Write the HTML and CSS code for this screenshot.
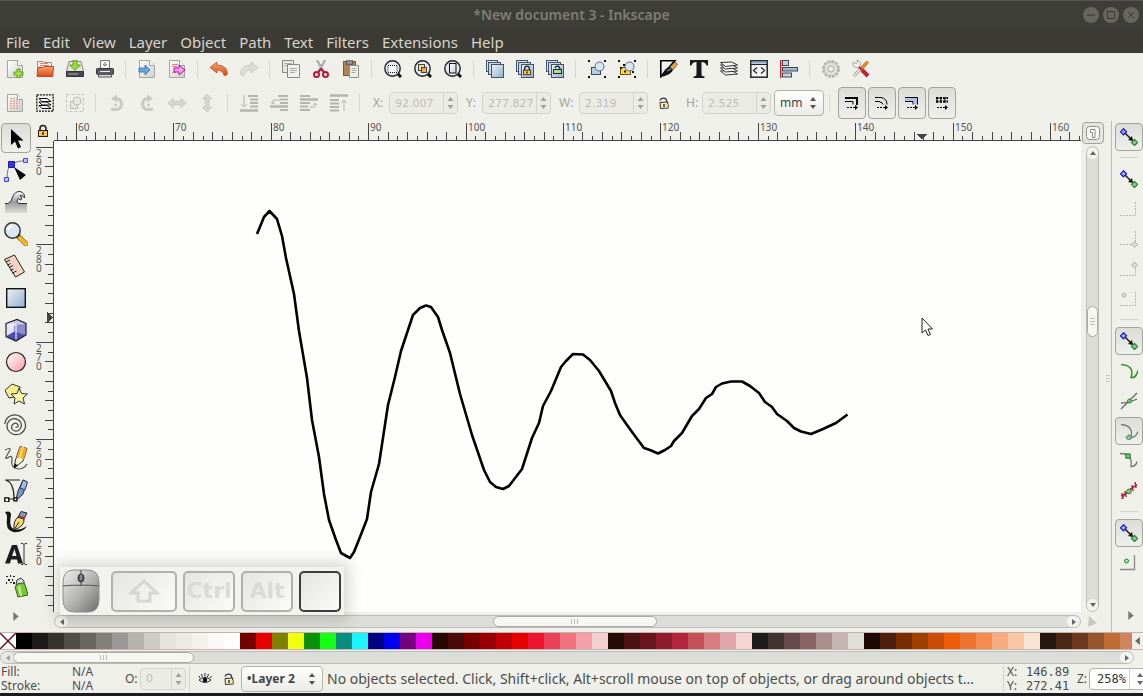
FILE: index.html
```html
<!DOCTYPE html>
<html lang="en">
<head>
<meta charset="utf-8">
<title>*New document 3 - Inkscape</title>
<link rel="stylesheet" href="styles.css">
</head>
<body>
<svg class="defs" aria-hidden="true">
  <defs>
    <linearGradient id="g-page" x1="0" y1="0" x2="1" y2="1"><stop offset="0" stop-color="#fff"/><stop offset="1" stop-color="#cfcfcc"/></linearGradient>
    <linearGradient id="g-orange" x1="0" y1="0" x2="0" y2="1"><stop offset="0" stop-color="#f5a67a"/><stop offset="1" stop-color="#dd4a14"/></linearGradient>
    <linearGradient id="g-blue" x1="0" y1="0" x2="1" y2="1"><stop offset="0" stop-color="#eef3f8"/><stop offset="1" stop-color="#8fafd0"/></linearGradient>
    <linearGradient id="g-pink" x1="0" y1="0" x2="1" y2="1"><stop offset="0" stop-color="#fff"/><stop offset="1" stop-color="#f79aa8"/></linearGradient>
    <linearGradient id="g-wave" x1="0" y1="0" x2="0" y2="1"><stop offset="0" stop-color="#fafafa"/><stop offset=".5" stop-color="#9a9a98"/><stop offset="1" stop-color="#dededb"/></linearGradient>
    <linearGradient id="g-mouse" x1="0" y1="0" x2="1" y2="1"><stop offset="0" stop-color="#f0f0ee"/><stop offset=".55" stop-color="#b0b0ae"/><stop offset="1" stop-color="#6c6c6a"/></linearGradient>
    <symbol id="page" viewBox="0 0 18 18"><path d="M1.500.5h10l5 5v12h-15z" fill="url(#g-page)" stroke="#a5a5a2"/><path d="M11.500.5v5h5" fill="#fff" stroke="#a5a5a2"/></symbol>
    <symbol id="lock" viewBox="0 0 12 14"><path d="M3 7V4.500a3 3 0 0 1 6 0V7" fill="none" stroke="#222" stroke-width="1.600"/><rect x="1.500" y="6.500" width="9" height="6" fill="#f2b32a" stroke="#2a1c04"/><path d="M2 8.500h8M2 10.500h8" stroke="#fbe08a"/><path d="M6 8v3" stroke="#2a1c04" stroke-width="1.500"/></symbol>
    <symbol id="unlock" viewBox="0 0 12 14"><path d="M2 4.500C3 1.500 8 1 8.500 4.500l1 3" fill="none" stroke="#333" stroke-width="1.300"/><path d="M2 6.500l7.500-.5 1 6-8 .5z" fill="#f5f0c0" stroke="#333"/><path d="M9 8l1 4" stroke="#e4c040"/><path d="M6 8v3" stroke="#222" stroke-width="1.400"/></symbol>
    <symbol id="lens" viewBox="0 0 18 18"><path d="M13 13l4 4" stroke="#111" stroke-width="3"/><circle cx="8.500" cy="8.500" r="7.700" fill="#dfe9f3" stroke="#222" stroke-width="1.400"/></symbol>
    <symbol id="snap" viewBox="0 0 18 18"><path d="M5 5l7 7" stroke="#111" stroke-width="1.400"/><path d="M13 13l-1-5-4 4z" fill="#111"/><path d="M3.500.8l3 3-3 3-3-3z" fill="#aab2ff" stroke="#2020c8" stroke-width="1.300"/><path d="M14.500 11.500l3 3-3 3-3-3z" fill="#9cc4b4" stroke="#2a8f2a" stroke-width="1.300"/></symbol>
    <symbol id="dup" viewBox="0 0 18 18"><rect x=".5" y=".5" width="11" height="11" fill="#dbe6f0" stroke="#3f5266"/><rect x="2.500" y="2.500" width="12" height="12" fill="#c9d8e8" stroke="#3f5266"/><rect x="5.500" y="4.500" width="12" height="13" fill="url(#g-blue)" stroke="#3f5266"/></symbol>
    <symbol id="grpshape" viewBox="0 0 18 18"><rect x="3.500" y="7.500" width="9" height="7" fill="#b9cbe0" stroke="#445"/><circle cx="11.500" cy="6.500" r="4.500" fill="#d9e5f1" stroke="#556677"/></symbol>
    <symbol id="corners" viewBox="0 0 18 18"><path d="M0 0h2v2H0zM16 0h2v2h-2zM0 16h2v2H0zM16 16h2v2h-2z" fill="#111"/></symbol>
    <symbol id="rot" viewBox="0 0 18 18"><path d="M3 15q10 2.500 10.500-5Q13 4.500 8 4.500" fill="none" stroke="#c9c9c5" stroke-width="3"/><path d="M3 4.500L9 .5v8z" fill="#c9c9c5"/><circle cx="7.500" cy="11" r="1.500" fill="#c9c9c5"/></symbol>
    <symbol id="arr" viewBox="0 0 18 18"><path d="M0 9l5-5v3h8V4l5 5-5 5v-3H5v3z" fill="#d5d5d1" stroke="#c2c2be" stroke-width=".6"/></symbol>
    <symbol id="spin" viewBox="0 0 8 16"><path d="M4 2l3 4H1zM4 14l3-4H1z" fill="currentColor"/></symbol>
  </defs>
</svg>

<header class="titlebar">
  <h1 class="title">*New document 3 - Inkscape</h1>
  <div class="winctl">
    <button class="wbtn" aria-label="Minimize"><svg viewBox="0 0 16 16"><path d="M4 8h8"/></svg></button>
    <button class="wbtn" aria-label="Maximize"><svg viewBox="0 0 16 16"><path d="M4.500 4.500h7v7h-7z"/></svg></button>
    <button class="wbtn" aria-label="Close"><svg viewBox="0 0 16 16"><path d="M5 5l6 6M11 5l-6 6"/></svg></button>
  </div>
</header>
<nav class="menubar">
  <button>File</button><button>Edit</button><button>View</button><button>Layer</button><button>Object</button><button>Path</button><button>Text</button><button>Filters</button><button>Extensions</button><button>Help</button>
</nav>

<div class="toolbar commands" role="toolbar" aria-label="Commands">
  <button class="tb" aria-label="New"><svg viewBox="0 0 18 18"><use href="#page"/><path d="M11 9h3v3h3v3h-3v3h-3v-3H8v-3h3z" fill="#a8e03c" stroke="#4c8a10" stroke-width=".8"/></svg></button>
  <button class="tb" aria-label="Open"><svg viewBox="0 0 18 18"><path d="M1.500 16V1.500h6l1 1h7V16z" fill="#eee" stroke="#a58d84"/><path d="M4 3.500h8M4 5.500h9" stroke="#e08870"/><path d="M2 7.500h5l1-1h9.500l-.7 10H1z" fill="url(#g-orange)" stroke="#c04a1c"/></svg></button>
  <button class="tb" aria-label="Save"><svg viewBox="0 0 18 18"><path d="M3 1.500h12l2.500 10v5H.5v-5z" fill="#e4e4e2" stroke="#888"/><path d="M.5 11.500h17v5H.5z" fill="#4a4a4a" stroke="#333"/><path d="M2 14h10" stroke="#aaa"/><path d="M7 0h4v5h3.500L9 10.500 3.500 5H7z" fill="#98dc38" stroke="#4f9612" stroke-width=".8"/></svg></button>
  <button class="tb" aria-label="Print"><svg viewBox="0 0 18 18"><path d="M4.500.5h9v9h-9z" fill="#f6f6f6" stroke="#777"/><path d="M9 2v4M7 4l2 2 2-2" stroke="#777" fill="none"/><rect x=".5" y="8.500" width="17" height="6" rx="1" fill="#5c5c5c" stroke="#333"/><path d="M4 11.500h10" stroke="#eee"/><path d="M2.500 14.500h13v2.500h-13z" fill="#ddd" stroke="#555"/></svg></button>
  <i class="sep"></i>
  <button class="tb" aria-label="Import"><svg viewBox="0 0 18 18"><use href="#page"/><path d="M1 8h6V5l5 5-5 5v-3H1z" fill="#6ba7dc" stroke="#2f6ca6" stroke-width=".8"/></svg></button>
  <button class="tb" aria-label="Export"><svg viewBox="0 0 18 18"><use href="#page"/><path d="M4 4.500h6M4 6.500h5M4 12.500h4" stroke="#e07f7f"/><path d="M6 8h5V5l6 5-6 5v-3H6z" fill="#f0a0e8" stroke="#b010b0"/></svg></button>
  <i class="sep"></i>
  <button class="tb" aria-label="Undo"><svg viewBox="0 0 18 18"><path d="M0 7.500L7 2v3q10 0 10.500 9-.5 1.500-3.500 1.500Q13 10 7 10v3z" fill="url(#g-orange)" stroke="#c2521c" stroke-width=".8"/></svg></button>
  <button class="tb" aria-label="Redo" disabled><svg viewBox="0 0 18 18"><path d="M18 7.500L11 2v3Q1 5 .5 14q.5 1.500 3.500 1.500Q5 10 11 10v3z" fill="#dcdcd8" stroke="#c6c6c2" stroke-width=".8"/></svg></button>
  <i class="sep"></i>
  <button class="tb" aria-label="Copy"><svg viewBox="0 0 18 18"><path d="M.5.5h11v12H.5z" fill="#e6e6e3" stroke="#888"/><path d="M2.500 3.500h7M2.500 5.500h3" stroke="#aaa"/><path d="M5.500 4.500h12v13h-12z" fill="#f0f0ee" stroke="#888"/><path d="M8 8.500h7M8 10.500h7M8 12.500h5" stroke="#aaa"/></svg></button>
  <button class="tb" aria-label="Cut"><svg viewBox="0 0 18 18"><path d="M5 0l6.500 12M13 0L6.500 12" stroke="#8d9090" stroke-width="2"/><path d="M5 0l6 11M13 0L7 11" stroke="#ddd" stroke-width=".6"/><circle cx="4.500" cy="14.500" r="2.500" fill="none" stroke="#b31c38" stroke-width="2"/><circle cx="13.500" cy="14.500" r="2.500" fill="none" stroke="#b31c38" stroke-width="2"/><path d="M6 12l3-3 3 3" fill="none" stroke="#b31c38" stroke-width="2"/></svg></button>
  <button class="tb" aria-label="Paste"><svg viewBox="0 0 18 18"><rect x="1.500" y="1.500" width="12" height="14" fill="#ad8555" stroke="#775a36"/><rect x="4.500" y=".8" width="6" height="3.500" fill="#999" stroke="#555"/><path d="M7.500 5.500h9v12h-9z" fill="#efefec" stroke="#8f8f8c"/><path d="M9.500 8.500h5M9.500 10.500h5M9.500 12.500h4" stroke="#aaa"/></svg></button>
  <i class="sep"></i>
  <button class="tb" aria-label="Zoom selection"><svg viewBox="0 0 18 18"><use href="#lens"/><rect x="4" y="5.500" width="9" height="7" fill="#fff" stroke="#111" stroke-dasharray="1 1"/></svg></button>
  <button class="tb" aria-label="Zoom drawing"><svg viewBox="0 0 18 18"><use href="#lens"/><rect x="4.500" y="4.500" width="6" height="6" fill="#f0d7b0" stroke="#443"/><rect x="7.500" y="7.500" width="5" height="5" fill="#f1a94a" stroke="#443"/></svg></button>
  <button class="tb" aria-label="Zoom page"><svg viewBox="0 0 18 18"><use href="#lens"/><rect x="5.500" y="3.500" width="6.500" height="9.500" fill="url(#g-page)" stroke="#111"/></svg></button>
  <i class="sep"></i>
  <button class="tb" aria-label="Duplicate"><svg viewBox="0 0 18 18"><use href="#dup"/></svg></button>
  <button class="tb" aria-label="Clone"><svg viewBox="0 0 18 18"><use href="#dup"/><use href="#lock" x="6" y="5" width="10" height="11"/></svg></button>
  <button class="tb" aria-label="Unlink clone"><svg viewBox="0 0 18 18"><use href="#dup"/><path d="M9 8c1-3 5-2 5 1v2" fill="none" stroke="#222" stroke-width="1.300"/><rect x="7.500" y="9.500" width="8" height="4" fill="#b9dca0" stroke="#1c2c14"/></svg></button>
  <i class="sep"></i>
  <button class="tb" aria-label="Group"><svg viewBox="0 0 18 18"><use href="#grpshape"/><use href="#corners"/></svg></button>
  <button class="tb" aria-label="Ungroup"><svg viewBox="0 0 18 18"><rect x="2.500" y="7.500" width="10" height="7" fill="#f7d64a" stroke="#665010"/><circle cx="11.500" cy="6.500" r="4.500" fill="#d9e5f1" stroke="#556677"/><use href="#corners"/><path d="M6 10.500h2v2H6zM5 4h2v2H5zM14 11h2v2h-2zM2 7h2v2H2z" fill="#111"/></svg></button>
  <i class="sep"></i>
  <button class="tb" aria-label="Fill and Stroke"><svg viewBox="0 0 18 18"><path d="M.8.8h14l-14 16z" fill="url(#g-page)" stroke="#000" stroke-width="1.600"/><path d="M1 17Q5 7 10 7l3 3q-2 5-12 7z" fill="#111"/><path d="M10 7l5-5 2.500 2L13 10z" fill="#e8a532" stroke="#444" stroke-width=".7"/><path d="M7 11l4-2" stroke="#aaa"/></svg></button>
  <button class="tb" aria-label="Text and Font"><svg viewBox="0 0 18 18"><path d="M0 0h18v5.500h-1.500Q16 2 11.500 2v12q0 2.500 3 2.500V18H3.500v-1.500q3 0 3-2.500V2Q2 2 1.500 5.500H0z" fill="#1a1a1a"/></svg></button>
  <button class="tb" aria-label="Layers"><svg viewBox="0 0 18 18"><g fill="#f6f6f4" stroke="#333"><path d="M.5 11l11-.5 6 3.500-12 1z"/><path d="M.5 8l11-.5 6 3.500-12 1z"/><path d="M.5 5l11-.5 6 3.500-12 1z"/><path d="M.5 2.500l11-.5 6 3-12 1.500z"/></g></svg></button>
  <button class="tb" aria-label="XML editor"><svg viewBox="0 0 18 18"><rect x=".8" y=".8" width="16.400" height="16.400" fill="#f3f3f3" stroke="#222" stroke-width="1.500"/><path d="M1.500 2.500h15" stroke="#84a4c8" stroke-width="2"/><path d="M1 4.500h16" stroke="#222"/><path d="M7 7.500L3.500 10.500 7 13.500M11 7.500l3.500 3-3.500 3" fill="none" stroke="#222" stroke-width="1.200"/></svg></button>
  <button class="tb" aria-label="Align"><svg viewBox="0 0 18 18"><path d="M.7 0v18" stroke="#c51f30" stroke-width="1.400"/><rect x="2.500" y=".5" width="6" height="5" fill="#c3d2e4" stroke="#445"/><rect x="2.500" y="7.500" width="15" height="3.500" fill="#9fb9d6" stroke="#445"/><rect x="2.500" y="13" width="9" height="4" fill="#c3d2e4" stroke="#445"/></svg></button>
  <i class="sep"></i>
  <button class="tb" aria-label="Preferences"><svg viewBox="0 0 18 18"><circle cx="9" cy="9" r="8" fill="none" stroke="#b0b0ac" stroke-width="1.800" stroke-dasharray="3 1.200"/><circle cx="9" cy="9" r="6.800" fill="#e0e0dd" stroke="#b4b4b0"/><circle cx="9" cy="9" r="3" fill="#f0f0eb" stroke="#a9a9a6"/></svg></button>
  <button class="tb" aria-label="Document properties"><svg viewBox="0 0 18 18"><path d="M2 16L10 7" stroke="#999" stroke-width="3"/><path d="M2 16L10 7" stroke="#eee" stroke-width="1.400"/><path d="M6 8L1.500 6.500.5 3 2 2l2 2 2-2-1.500-1.500Q9 0 8.500 5z" fill="#eee" stroke="#999" stroke-width=".8"/><path d="M10 8l5-5.500" stroke="#d88a2c" stroke-width="3.500" stroke-linecap="round"/><path d="M7 7l3 3" stroke="#c02234" stroke-width="2"/><path d="M10 10l6 6" stroke="#c02234" stroke-width="4"/></svg></button>
</div>

<div class="toolbar options" role="toolbar" aria-label="Tool options">
  <button class="tb" aria-label="Select all"><svg viewBox="0 0 18 18"><use href="#page"/><path d="M4 4.500h7M4 7h10M4 9.500h10M4 12h10M4 14.500h10" stroke="#dfa9a0" stroke-width="1.600" stroke-dasharray="2 1"/></svg></button>
  <button class="tb" aria-label="Select in all layers"><svg viewBox="0 0 18 18"><rect x=".8" y=".8" width="16.400" height="16.400" fill="none" stroke="#111" stroke-width="1.300" stroke-dasharray="2 1"/><g fill="#fafaf8" stroke="#111"><path d="M3 11.500h8l4 3H6z"/><path d="M3 8h8l4 3H6z"/><path d="M3 4.500h8l4 3H6z"/></g></svg></button>
  <button class="tb" aria-label="Deselect" disabled><svg viewBox="0 0 18 18"><rect x=".5" y=".5" width="17" height="17" fill="none" stroke="#c2c2be" stroke-dasharray="3 2"/><rect x="4.500" y="7.500" width="7" height="7" fill="#e6e6e3" stroke="#bdbdb9"/><circle cx="11" cy="7" r="4" fill="#e6e6e3" stroke="#bdbdb9"/></svg></button>
  <i class="sep"></i>
  <button class="tb" aria-label="Rotate left" disabled><svg viewBox="0 0 18 18"><use href="#rot"/></svg></button>
  <button class="tb" aria-label="Rotate right" disabled><svg viewBox="0 0 18 18"><use href="#rot" transform="matrix(-1 0 0 1 18 0)"/></svg></button>
  <button class="tb" aria-label="Flip horizontal" disabled><svg viewBox="0 0 18 18"><use href="#arr"/></svg></button>
  <button class="tb" aria-label="Flip vertical" disabled><svg viewBox="0 0 18 18"><use href="#arr" transform="rotate(90 9 9)"/></svg></button>
  <i class="sep"></i>
  <button class="tb" aria-label="Lower to bottom" disabled><svg class="dim" viewBox="0 0 18 18"><path d="M8 2h10M10 5.500h8M10 9h8M10 12.500h8" stroke-width="2"/><path d="M0 16.500h18" stroke-width="2.500"/><path d="M4 1v12M1 10l3 3 3-3"/></svg></button>
  <button class="tb" aria-label="Lower" disabled><svg class="dim" viewBox="0 0 18 18"><path d="M8 2h10M10 5.500h8M10 9h8M10 16h8" stroke-width="2"/><path d="M0 12.500h18" stroke-width="2.500"/><path d="M10 6H3v4M1 8l2 2 2-2"/></svg></button>
  <button class="tb" aria-label="Raise" disabled><svg class="dim" viewBox="0 0 18 18"><path d="M0 2h10M0 9h10M0 12.500h8M0 16h10" stroke-width="2"/><path d="M0 5.500h18" stroke-width="2.500"/><path d="M10 13h5V9M13 11l2-2 2 2"/></svg></button>
  <button class="tb" aria-label="Raise to top" disabled><svg class="dim" viewBox="0 0 18 18"><path d="M0 1.500h18" stroke-width="2.500"/><path d="M0 6h9M0 9.500h9M0 13h9M0 16.500h9" stroke-width="2"/><path d="M14 17V6M11 9l3-3 3 3"/></svg></button>
  <i class="sep"></i>
  <div class="fields">
    <div class="field"><label for="fx">X:</label><span class="spinbox off"><input id="fx" value="92.007" disabled><svg><use href="#spin"/></svg></span></div>
    <div class="field"><label for="fy">Y:</label><span class="spinbox off"><input id="fy" value="277.827" disabled><svg><use href="#spin"/></svg></span></div>
    <div class="field wide"><label for="fw">W:</label><span class="spinbox off"><input id="fw" value="2.319" disabled><svg><use href="#spin"/></svg></span></div>
    <button class="mini" aria-label="Lock ratio"><svg><use href="#unlock"/></svg></button>
    <div class="field"><label for="fh">H:</label><span class="spinbox off"><input id="fh" value="2.525" disabled><svg><use href="#spin"/></svg></span></div>
    <span class="combo unit"><select aria-label="Unit"><option>mm</option></select><svg><use href="#spin"/></svg></span>
  </div>
  <i class="sep"></i>
  <div class="toggles">
    <button class="tog" aria-label="Scale stroke width"><svg viewBox="0 0 14 14"><path d="M0 2h12v7" fill="none" stroke="#000" stroke-width="2"/><path d="M0 5.500h8v3" fill="none" stroke="#000"/><path d="M2 11.500h8" stroke="#000" stroke-dasharray="2 1"/><path d="M10 9l3 2.500-3 2.500z"/></svg></button>
    <button class="tog" aria-label="Scale corners"><svg viewBox="0 0 14 14"><path d="M0 1.500h6q6 1 6 7M0 5.500h4q4 1 4 3" fill="none" stroke="#000"/><path d="M2 11.500h8" stroke="#000" stroke-dasharray="2 1"/><path d="M10 9l3 2.500-3 2.500z"/></svg></button>
    <button class="tog" aria-label="Move gradients"><svg viewBox="0 0 14 14"><path d="M0 1.500h12.500v7H9V5H0z" fill="#a9c3e4"/><path d="M0 1.500h12.500v7M0 5.500h8v3" fill="none" stroke="#000"/><path d="M2 11.500h8" stroke="#000" stroke-dasharray="2 1"/><path d="M10 9l3 2.500-3 2.500z"/></svg></button>
    <button class="tog" aria-label="Move patterns"><svg viewBox="0 0 14 14"><path d="M1 2h12M1 5.500h12" stroke="#000" stroke-width="2" stroke-dasharray="2.500 1"/><path d="M2 1v6M6 1v6M10 1v6" stroke="#000"/><path d="M2 11.500h8" stroke="#000" stroke-dasharray="2 1"/><path d="M10 9l3 2.500-3 2.500z"/></svg></button>
  </div>
</div>

<main class="work">
  <div class="toolbox" role="toolbar" aria-label="Tools">
    <button class="tool on" aria-label="Select"><svg viewBox="0 0 24 24"><path d="M7 3v16l4-3.500 3 7 3-1.500-3-6.500h5.500z" fill="#000"/></svg></button>
    <button class="tool" aria-label="Node"><svg viewBox="0 0 24 24"><path d="M3 21Q3 9 7 6.500 12 3 21 2.500" fill="none" stroke="#777"/><path d="M10 9l12 8-6 5z" fill="#000"/><path d="M4.500 3.500h6v6h-6z" fill="#3434d8" stroke="#1c1cb0"/><path d="M19.500.5h4v4h-4zM.5 19.500h4v4h-4z" fill="#c2c2f8" stroke="#4646c8"/></svg></button>
    <button class="tool" aria-label="Tweak"><svg viewBox="0 0 24 24"><path d="M1 13.500h3Q8 12 8.500 7 11 1 16 1.500q5 1 4.500 6.500Q19 5 16 5.500q3 2 1 4.500-2 0-2.500-2-3 3 0 5.500H23V23H1z" fill="url(#g-wave)"/><path d="M1 13.500h3Q8 12 8.500 7 11 1 16 1.500q5 1 4.500 6.500Q19 5 16 5.500q3 2 1 4.500-2 0-2.500-2-3 3 0 5.500H23" fill="none" stroke="#333"/></svg></button>
    <button class="tool" aria-label="Zoom"><svg viewBox="0 0 24 24"><path d="M13.500 13.500L22 22" stroke="#6c4a10" stroke-width="5" stroke-linecap="round"/><path d="M16 16l6 6" stroke="#f5b52a" stroke-width="4" stroke-linecap="round"/><circle cx="8.500" cy="8.500" r="7.700" fill="#dce7f2" stroke="#333" stroke-width="1.500"/><path d="M4 8q1-4 5-4" stroke="#fff" fill="none" stroke-width="2"/></svg></button>
    <button class="tool" aria-label="Measure"><svg viewBox="0 0 24 24"><path d="M.5 5.500L10.500 1l10 17-9 5z" fill="#f4d3c4" stroke="#222"/><path d="M2 8l4-2M3.500 11l3-1.500M5 13.500l4-2M6.500 16.500l3-1.500M8.500 19l4-2" stroke="#222"/></svg></button>
    <button class="tool" aria-label="Rectangle"><svg viewBox="0 0 24 24"><rect x="2.700" y="2.700" width="18.600" height="18.600" fill="url(#g-blue)" stroke="#111" stroke-width="1.400"/></svg></button>
    <button class="tool" aria-label="3D box"><svg viewBox="0 0 24 24"><path d="M2 5.500L13 1.500l9 4V17l-10 6-10-4.500z" fill="#c9c9ea"/><path d="M10 7l12-1v11l-12-3z" fill="#8c8cd0"/><path d="M2.500 18L10 13.500 22 17l-10 6z" fill="#4c4cae"/><path d="M2 5.500l8-1v9L2 18z" fill="#e4e4f6"/><path d="M5 8.500l7-2v15" fill="none" stroke="#fff"/><path d="M2 5.500L13 1.500l9 4V17l-10 6-10-4.500z" fill="none" stroke="#222" stroke-width="1.200"/></svg></button>
    <button class="tool" aria-label="Ellipse"><svg viewBox="0 0 24 24"><circle cx="12" cy="12" r="9.500" fill="url(#g-pink)" stroke="#222" stroke-width="1.200"/></svg></button>
    <button class="tool" aria-label="Star"><svg viewBox="0 0 24 24"><path d="M1 8.500L8 2l8 3-1 9-10 2z" fill="#f6ee8e" stroke="#333"/><path d="M15 6l2.500 5.500 6 .5-4.500 4 1.500 6-5.500-3-5 3 1-6-4-4 6-.5z" fill="#fbf6a8" stroke="#333"/></svg></button>
    <button class="tool" aria-label="Spiral"><svg viewBox="0 0 24 24"><path d="M11.500 13.500q3 0 2.500-2.500Q12.500 8.500 10 9.500q-3.500 2-2 5.500 2.500 3.500 6.500 1.500 4.500-3.500 2-8.500-4-5-9.500-2.500-6 4-3 10.500 4.500 6.500 12 4 8-5 4.500-13Q15.500-1 7 1.500 1.500 4 .8 10" fill="none" stroke="#444" stroke-width="1.200"/></svg></button>
    <button class="tool" aria-label="Pencil"><svg viewBox="0 0 24 24"><path d="M1 4q6-3 5 0L2 11q-1 3 3 0 3-2 3 2-2 9 6 10 6 0 9-5" fill="none" stroke="#555" stroke-width="1.200"/><path d="M10 22l1.500-8L16 .5l7 2L19 15z" fill="#fff3cf" stroke="#333"/><path d="M12.500 12L16 .5l7 2-3.500 11-3-2z" fill="#f3a81f"/><path d="M16 11L19 1" stroke="#ffe072" stroke-width="2"/><path d="M10 22.500l.8-5 3 2z" fill="#000"/></svg></button>
    <button class="tool" aria-label="Bezier pen"><svg viewBox="0 0 24 24"><path d="M1 2h15M2 2q8 3 8 18M3 21h10" fill="none" stroke="#222" stroke-width="1.200"/><path d="M12 21l2-8 5-11 4 2-4 12-4 4z" fill="#7496ba" stroke="#334"/><path d="M19 2l4.500 2-2.500 8-5-2z" fill="#9cc0e4" stroke="#334"/><path d="M.8 19.800h4v4h-4zM10 19.800h3v3h-3z" fill="#fff" stroke="#000" stroke-width="1.300"/></svg></button>
    <button class="tool" aria-label="Calligraphy"><svg viewBox="0 0 24 24"><path d="M1 2q6-2 6 3-2 9 1 13 6 4 15-2-4 7-14 6Q1 20 3 8q0-4-2-6z" fill="#151515"/><path d="M10 20q-1-9 4-13l6 2q1 7-10 11z" fill="#f5d876" stroke="#222"/><path d="M10 20l5-8" stroke="#222"/><path d="M14 7l3-5.500 6 1.500-3 6z" fill="#7c9cc4" stroke="#222"/><path d="M15 6l6 2" stroke="#c33" stroke-width="1.500"/></svg></button>
    <button class="tool" aria-label="Text"><svg viewBox="0 0 24 24"><path d="M1 21.500L8 3h5l6 18.500h-5l-1-4H7l-1 4zM8 14h4.500L10.500 7z" fill="#1e1e1e"/><path d="M17 1.500h2l1 1 1-1h2M20 2v20M17 22.500h2l1-1 1 1h2" fill="none" stroke="#333"/></svg></button>
    <button class="tool" aria-label="Spray"><svg viewBox="0 0 24 24"><path d="M2 2h2v1H2zM6 1h1v2H6zM9 2h2v1H9zM4 5h2v2H4zM8 5h1v2H8zM2 8h1v2H2zM6 8h2v1H6zM9 8h2v2H9z" fill="#222"/><path d="M12 11l1-5 4-2 3 3v4z" fill="#ddd" stroke="#333"/><path d="M11 13l3-3.500 6-.5 1.500 3L24 21l-10 2z" fill="#78c838" stroke="#2d6412"/><path d="M15 12l2 10" stroke="#caf09c" stroke-width="2"/></svg></button>
    <button class="more" aria-label="More tools"><svg viewBox="0 0 6 10"><path d="M0 0l6 5-6 5z"/></svg></button>
  </div>

  <button class="guide-lock" aria-label="Lock guides"><svg><use href="#lock"/></svg></button>
  <svg class="hruler" id="hruler" aria-label="Horizontal ruler"></svg>
  <svg class="vruler" id="vruler" aria-label="Vertical ruler"></svg>

  <section class="canvas" aria-label="Canvas">
    <svg class="drawing">
      <g transform="translate(-54 -141)">
        <polyline fill="none" stroke="#000" stroke-width="2.600" stroke-linejoin="round" points="257,234 264,217 269.500,211 277,219 282,236 286,258 294,294 299,331 307,378 312,420 319,457 324,494 329,520 336,540 341,553 350,558 354,552 360,537 367,519 371,492 379,464 388,405 395,377 401,351 413,315 420,308 426,305.500 431,307 438,317 442,330 450,353 460,394 472,435 484,470 490,482 496,487 503,489 509,486 522,469 532,438 539,423 543,406 551,391 561,367 566,361 573,354 583,354.500 590,360 599,371 611,391 615,403 620,415 627,425 635,436 644,448 650,450 658,453.500 665,450 671,446 674,441 682,433 692,416 699,409 706,398 712,394 716,387 722,383.500 731,381.500 742,381.500 750,386 759,393 765,402 772,407 777,414 787,421 794,428 801,431.500 811,434 823,429 836,423 847.500,414.500"/>
        <path d="M922 318v15l3.500-3 2.500 5.500 2.500-1-2.500-5.500h4.500z" fill="#fff" stroke="#222"/>
      </g>
    </svg>
    <div class="keys">
      <svg class="mouse" viewBox="0 0 38 44"><path d="M1 14Q1 1 12 1h14q11 0 11 13v16q0 13-11 13H12Q1 43 1 30z" fill="url(#g-mouse)" stroke="#8c8c8a"/><path d="M1 17q18-2 36 0M19 1v16" fill="none" stroke="#555" stroke-width="1.200"/><ellipse cx="19" cy="9" rx="3" ry="4" fill="#555b66" stroke="#333"/><path d="M19 6v5" stroke="#bcc4d0"/></svg>
      <span class="key shift"><svg viewBox="0 0 34 24"><path d="M17 2l13 12h-7v8H11v-8H4z" fill="none" stroke="#d6d6d3" stroke-width="3"/></svg></span>
      <span class="key">Ctrl</span>
      <span class="key">Alt</span>
      <span class="key last"></span>
    </div>
  </section>

  <button class="corner" aria-label="Display mode"><svg viewBox="0 0 18 18"><rect x="2.500" y="2.500" width="13" height="13" rx="3" fill="#f6f6f3" stroke="#8f8f8c"/><path d="M6.500 5.500h4.500v8H8.500V8.500h-2z" fill="#fff" stroke="#888"/></svg></button>
  <div class="vscroll"><span class="vtrack"><b class="vend top"><svg viewBox="0 0 6 4"><path d="M0 4l3-4 3 4z"/></svg></b><b class="vthumb"></b><b class="vend bottom"><svg viewBox="0 0 6 4"><path d="M0 0l3 4 3-4z"/></svg></b></span><i class="grip"></i></div>
  <div class="hscroll"><span class="htrack"><b class="hend left"><svg viewBox="0 0 4 6"><path d="M4 0v6L0 3z"/></svg></b><b class="hthumb"></b><b class="hend right"><svg viewBox="0 0 4 6"><path d="M0 0v6l4-3z"/></svg></b></span></div>
  <div class="cms"><svg viewBox="0 0 10 11"><path d="M2 0l8 7-9 4z" fill="#c8c8c5"/></svg></div>

  <aside class="snapbar" role="toolbar" aria-label="Snapping">
    <button class="snap on" aria-label="Enable snapping"><svg viewBox="0 0 18 18"><use href="#snap"/></svg></button>
    <i class="hsep"></i>
    <button class="snap" aria-label="Snap bounding boxes"><svg viewBox="0 0 18 18"><use href="#snap"/></svg></button>
    <button class="snap" aria-label="Snap to edges" disabled><svg viewBox="0 0 18 18"><path class="dash" d="M0 15.500h15.500V1"/></svg></button>
    <button class="snap" aria-label="Snap to corners" disabled><svg viewBox="0 0 18 18"><path class="dash" d="M0 14.500h15.500V1"/><path class="pt" d="M14.500 11.500l3 3-3 3-3-3z"/></svg></button>
    <button class="snap" aria-label="Snap edge midpoints" disabled><svg viewBox="0 0 18 18"><path class="dash" d="M0 15.500h15.500V1"/><path class="pt" d="M14.500 2l3 3-3 3-3-3z"/></svg></button>
    <button class="snap" aria-label="Snap centers" disabled><svg viewBox="0 0 18 18"><path class="dash" d="M0 15.500h15.500V1"/><circle class="pt" cx="4" cy="5" r="2"/></svg></button>
    <i class="hsep"></i>
    <button class="snap on" aria-label="Snap nodes"><svg viewBox="0 0 18 18"><use href="#snap"/></svg></button>
    <button class="snap" aria-label="Snap to paths"><svg viewBox="0 0 18 18"><path d="M1 2.500q14 1 10 13 5 1 7-7" fill="none" stroke="#2f9a2f" stroke-width="1.600"/></svg></button>
    <button class="snap" aria-label="Snap to intersections"><svg viewBox="0 0 18 18"><path d="M1 17L17 1M1 11q8 0 16-4" fill="none" stroke="#666" stroke-width="1.300"/><circle cx="9.500" cy="9" r="2" fill="#8ac08a" stroke="#1c8a1c"/></svg></button>
    <button class="snap on" aria-label="Snap cusp nodes"><svg viewBox="0 0 18 18"><path d="M1 2.500q13 1 10 13 5 0 7-6" fill="none" stroke="#777" stroke-width="1.300"/><path d="M9 12.500l3 3-3 3-3-3z" fill="#8fc2b0" stroke="#1c8a1c"/></svg></button>
    <button class="snap" aria-label="Snap smooth nodes"><svg viewBox="0 0 18 18"><path d="M0 1.500q13 0 11 13 5 0 6-5" fill="none" stroke="#777" stroke-width="1.300"/><rect x="6" y="2" width="4" height="4" fill="#8fc2b0" stroke="#1c8a1c" stroke-width="1.300"/></svg></button>
    <button class="snap" aria-label="Snap midpoints"><svg viewBox="0 0 18 18"><path d="M1 17L17 2" stroke="#666"/><path d="M2 11l1 6M5 9l1 6M1 14l6-3M12 3l1 6M15 0l1 6M10 7l7-4" stroke="#b01c2c" stroke-width="1.400"/><circle cx="9" cy="9.500" r="2.300" fill="#8fc28f" stroke="#1c8a1c"/></svg></button>
    <i class="hsep"></i>
    <button class="snap on" aria-label="Snap others"><svg viewBox="0 0 18 18"><use href="#snap"/></svg></button>
    <button class="snap" aria-label="Snap to page"><svg viewBox="0 0 18 18"><path d="M0 15.500h14.500V1" fill="none" stroke="#888" stroke-width="1.300"/><circle cx="6.500" cy="7" r="2" fill="#bfe0bf" stroke="#1c8a1c"/></svg></button>
    <button class="more end" aria-label="More snap options"><svg viewBox="0 0 6 10"><path d="M0 0l6 5-6 5z"/></svg></button>
  </aside>
</main>

<div class="palette">
  <div class="swatches" id="swatches"></div>
  <button class="pal-menu" aria-label="Palette menu"><svg viewBox="0 0 6 10"><path d="M6 0v10L0 5z"/></svg></button>
</div>
<div class="pscroll"><span class="htrack"><b class="hend left"><svg viewBox="0 0 4 6"><path d="M4 0v6L0 3z"/></svg></b><b class="hthumb"></b><b class="hend right"><svg viewBox="0 0 4 6"><path d="M0 0v6l4-3z"/></svg></b></span></div>

<footer class="status">
  <div class="style"><span>Fill:</span><span>N/A</span><span>Stroke:</span><span>N/A</span></div>
  <div class="opacity"><label for="op">O:</label><span class="spinbox off small"><input id="op" value="0" disabled><svg><use href="#spin"/></svg></span></div>
  <i class="vline"></i>
  <button class="mini" aria-label="Layer visibility"><svg class="eye" viewBox="0 0 14 12"><path d="M1 7q6-5 12 0-6 5-12 0z" fill="#fff" stroke="#222"/><circle cx="7" cy="7" r="2.300" fill="#111"/><path d="M2 5L1 3M4.500 4l-1-3M7 3.500V0M9.500 4l1-3M12 5l1.500-2" stroke="#222"/></svg></button>
  <button class="mini" aria-label="Layer lock"><svg><use href="#unlock"/></svg></button>
  <span class="combo layer"><select aria-label="Current layer"><option>•Layer 2</option></select><svg><use href="#spin"/></svg></span>
  <p class="message">No objects selected. Click, Shift+click, Alt+scroll mouse on top of objects, or drag around objects t…</p>
  <i class="vline"></i>
  <div class="coords"><span>X:</span><span>146.89</span><span>Y:</span><span>272.41</span></div>
  <div class="zoom"><label for="zm">Z:</label><span class="spinbox small"><input id="zm" value="258%"><svg><use href="#spin"/></svg></span></div>
</footer>
<script src="app.js"></script>
</body>
</html>
```

FILE: styles.css
```css
* { box-sizing: border-box; }

body {
  margin: 0;
  height: 100vh;
  display: flex;
  flex-direction: column;
  overflow: hidden;
  background: #f0f0eb;
  border-bottom: 3px solid #1f1a20;
  color: #4c4c4a;
  font: 14px/18px "Noto Sans", sans-serif;
}

button { padding: 0; border: 0; background: none; font: inherit; color: inherit; }
svg { display: block; flex: none; }
.defs { position: absolute; width: 0; height: 0; }

.titlebar {
  flex: none;
  height: 30px;
  display: grid;
  grid-template-columns: 1fr auto 1fr;
  align-items: center;
  padding: 0 4px 1px;
  background: #3e3e38;
  border-top: 1px solid #55554e;
}
.title { grid-column: 2; margin: 0; font-size: 14px; line-height: 18px; font-weight: 600; color: #7f7d74; }
.winctl { display: flex; justify-content: flex-end; gap: 4px; }
.wbtn { width: 16px; height: 16px; border-radius: 50%; background: #67665c; }
.wbtn svg { width: 16px; height: 16px; fill: none; stroke: #3a3933; stroke-width: 1; }

.menubar {
  flex: none;
  height: 23px;
  display: flex;
  gap: 13px;
  padding: 0 6px;
  background: #3b3a34;
  color: #d8d5cc;
  font-size: 15px;
}

.toolbar { flex: none; display: flex; align-items: center; }
.commands { height: 32px; }
.options { height: 36px; }
.tb { width: 30px; height: 30px; display: grid; place-items: center; }
.tb svg { width: 18px; height: 18px; }
.dim { fill: none; stroke: #b4b4b0; }
.sep { flex: none; width: 12px; height: 18px; background: linear-gradient(#d8d8d3, #d8d8d3) 5px 0 / 1px 100% no-repeat; }

.fields { display: flex; align-items: center; padding-left: 7px; }
.field { display: flex; justify-content: space-between; align-items: center; width: 85px; margin-right: 8px; font-size: 12px; color: #a4a4a0; }
.field.wide { width: 89px; }
.fields .mini { width: 16px; margin-right: 14px; }
.spinbox {
  display: flex;
  align-items: center;
  width: 69px;
  height: 22px;
  border: 1px solid #b4b4ae;
  border-radius: 4px;
  background: #fff;
  color: #666;
}
.spinbox.off { border-color: #d4d4ce; background: #ecece7; color: #a0a09c; }
.spinbox input {
  flex: 1;
  min-width: 0;
  height: 20px;
  padding: 0 0 0 5px;
  border: 0;
  border-right: 1px solid #d4d4ce;
  background: none;
  color: #333;
  font: 11px/18px "DejaVu Sans", sans-serif;
}
.spinbox.off input { color: #bdbdb8; }
.spinbox svg { width: 13px; height: 16px; }
.spinbox.small { width: 46px; }

.combo {
  position: relative;
  display: flex;
  align-items: center;
  height: 26px;
  border: 1px solid #b4b4ae;
  border-radius: 4px;
  background: linear-gradient(#fff, #ebebe6);
}
.combo select { width: 100%; height: 24px; padding: 0 5px; border: 0; appearance: none; background: none; color: #444; font: 12px/18px "Noto Sans", sans-serif; }
.combo svg { position: absolute; right: 6px; width: 8px; height: 16px; color: #555; pointer-events: none; }
.unit { width: 50px; margin-left: -5px; }
.layer { width: 82px; }
.layer select { font-weight: 700; }

.toggles { display: flex; gap: 2px; margin-left: 2px; }
.tog {
  width: 28px;
  height: 32px;
  display: grid;
  place-items: center;
  border: 1px solid #a3a39e;
  border-radius: 4px;
  background: linear-gradient(#dcdcd8, #efefec);
}
.tog svg { width: 14px; height: 14px; }

.work {
  flex: 1;
  min-height: 0;
  display: grid;
  grid-template-columns: 32px 22px minmax(0, 1fr) 30px 32px;
  grid-template-rows: 20px minmax(0, 1fr) 20px;
}
.toolbox { grid-row: 1 / 4; display: flex; flex-direction: column; padding-top: 1px; }
.tool { flex: none; width: 32px; height: 32px; display: grid; place-items: center; border: 1px solid transparent; }
.tool.on, .snap.on { border: 1px solid #a3a39e; border-radius: 4px; background: linear-gradient(#dcdcd8, #efefec); }
.tool.on { width: 30px; height: 30px; margin: 1px; }
.tool svg { width: 24px; height: 24px; }
.more { width: 32px; height: 28px; display: grid; place-items: center; fill: #777; }
.more svg { width: 6px; height: 9px; }

.guide-lock { grid-column: 2; grid-row: 1; display: grid; place-items: center; }
.guide-lock svg { width: 12px; height: 14px; }
.hruler { grid-column: 3; grid-row: 1; width: 100%; height: 20px; }
.vruler { grid-column: 2; grid-row: 2; width: 22px; height: 100%; }
.hruler, .vruler { fill: #555; font: 10px "Noto Sans", sans-serif; overflow: hidden; }
.hruler path, .vruler path { stroke: #444; fill: none; shape-rendering: crispEdges; }
.hruler .mark, .vruler .mark { fill: #444; stroke: none; }

.canvas { grid-column: 3; grid-row: 2; position: relative; background: #fefefc; }
.drawing { width: 100%; height: 100%; }
.keys {
  position: absolute;
  left: 6px;
  bottom: -3px;
  display: flex;
  align-items: center;
  gap: 6px;
  padding: 2px 3px 2px 2px;
  background: #f2f2ef;
  box-shadow: 0 0 14px 4px rgba(60, 60, 50, .22);
}
.mouse { width: 38px; height: 44px; margin-right: 5px; }
.key {
  width: 52px;
  height: 41px;
  display: grid;
  place-items: center;
  border: 2px solid #b0b0ad;
  border-radius: 5px;
  background: linear-gradient(135deg, #e4e4e1, #fbfbf9);
  color: #dadad7;
  font: 700 22px/28px "DejaVu Sans", sans-serif;
}
.key.shift { width: 66px; }
.key.shift svg { width: 34px; height: 24px; }
.key.last { width: 42px; border-color: #3c3c3a; }

.corner { grid-column: 4; grid-row: 1; width: 22px; height: 22px; margin: 1px 0 0 1px; display: grid; place-items: center; border: 1px solid #a3a39e; border-radius: 4px; background: #e4e4e0; z-index: 1; }
.corner svg { width: 18px; height: 18px; }
.vscroll { grid-column: 4; grid-row: 2; display: flex; align-items: center; justify-content: space-between; padding: 5px 1px 0 5px; }
.vtrack, .htrack { display: flex; border: 1px solid #bdbdb8; border-radius: 7px; background: #dcdcd8; overflow: hidden; }
.vtrack { width: 13px; height: 100%; flex-direction: column; }
.vend, .hend { flex: none; display: grid; place-items: center; background: #f3f3f0; fill: #666; }
.vend { height: 12px; border-radius: 6px; }
.vend svg { width: 6px; height: 4px; }
.vend.bottom { margin-top: auto; }
.vthumb { height: 31px; margin-top: 147px; border: 1px solid #aaaaa5; border-radius: 6px; background: repeating-linear-gradient(#bbb 0 1px, transparent 1px 3px) center / 5px 8px no-repeat, #f6f6f3; }
.grip { width: 4px; height: 8px; background: repeating-linear-gradient(#c4c4c0 0 1px, transparent 1px 3px); }
.hscroll { grid-column: 3; grid-row: 3; padding: 3px 0 0; }
.htrack { height: 13px; }
.hend { width: 13px; border-radius: 6px; }
.hend svg { width: 4px; height: 6px; }
.hend.right { margin-left: auto; }
.hthumb { width: 16%; margin-left: 41.500%; border: 1px solid #aaaaa5; border-radius: 6px; background: repeating-linear-gradient(90deg, #bbb 0 1px, transparent 1px 3px) center / 8px 5px no-repeat, #f6f6f3; }
.cms { grid-column: 4; grid-row: 3; padding: 4px 6px; }
.cms svg { width: 10px; height: 11px; }

.snapbar { grid-column: 5; grid-row: 1 / 4; display: flex; flex-direction: column; padding: 1px 0 0 3px; border-left: 1px solid #bdbdb8; }
.snap { flex: none; width: 28px; height: 28px; margin: 1px 0; display: grid; place-items: center; }
.snap svg { width: 18px; height: 18px; }
.dash { fill: none; stroke: #b8b8b4; stroke-dasharray: 2 1; }
.pt { fill: #dededa; stroke: #b0b0ac; }
.hsep { flex: none; height: 12px; margin: 0 5px; background: linear-gradient(#d3d3ce, #d3d3ce) 0 5px / 100% 1px no-repeat; }
.more.end { margin: auto 0 3px; }

.palette { flex: none; display: flex; height: 18px; border: 1px solid #c4b4ae; border-width: 1px 0; }
.swatches { flex: 1; display: flex; overflow: hidden; }
.swatch { flex: none; width: 16px; height: 16px; }
.pal-menu { width: 11px; display: grid; place-items: center; fill: #666; }
.pal-menu svg { width: 5px; height: 8px; }
.pscroll { flex: none; padding: 1px 9px 0 0; }
.pscroll .hthumb { width: 16%; margin-left: -1px; }
.pscroll .left { opacity: .5; }

.status { flex: none; height: 29px; display: flex; align-items: center; }
.style { display: grid; grid-template-columns: 71px 53px; padding-left: 1px; font-size: 12px; line-height: 14px; flex: none; }
.opacity, .zoom { display: flex; align-items: center; gap: 2px; font-size: 12px; flex: none; }
.opacity { width: 61px; justify-content: space-between; }
.vline { flex: none; width: 1px; height: 26px; margin: 0 3px; background: #d3d3ce; }
.mini { flex: none; width: 24px; height: 24px; display: grid; place-items: center; }
.mini svg { width: 12px; height: 14px; }
.mini svg.eye { width: 14px; height: 12px; }
.status .layer { flex: none; }
.message { flex: 1; min-width: 0; margin: 0 0 0 4px; overflow: hidden; white-space: nowrap; }
.coords { flex: none; display: grid; grid-template-columns: 19px 51px; font: 12px/14px "DejaVu Sans Mono", monospace; }
.coords span:nth-child(odd) { font-family: "Noto Sans", sans-serif; }
.zoom { margin-right: -8px; }
.zoom .spinbox { width: 62px; }
.zoom .spinbox svg { width: 20px; }
.zoom input { padding: 0 0 0 7px; font: 12px/18px "DejaVu Sans Mono", monospace; }
```

FILE: app.js
```js
// Screen distance between two ruler labels, in pixels.
const STEP = 97.4;

function tickPath(origin, length, baseline, sizes, vertical) {
  let d = "";
  for (let i = -20; i < 140; i++) {
    const pos = Math.round(origin + i * STEP / 10) + 0.5;
    if (pos < 0 || pos > length) continue;
    const size = i % 10 === 0 ? sizes[0] : i % 2 === 0 ? sizes[1] : sizes[2];
    d += vertical
      ? `M${baseline - size} ${pos}H${baseline}`
      : `M${pos} ${baseline - size}V${baseline}`;
  }
  return d;
}

function drawRulers() {
  const h = document.getElementById("hruler");
  const w = h.getBoundingClientRect().width;
  let out = `<path d="M0 19.5H${w}${tickPath(22, w, 19, [17, 8, 4], false)}"/>`;
  for (let k = 0; k * STEP < w; k++) {
    out += `<text x="${Math.round(22 + k * STEP) + 2}" y="10">${60 + k * 10}</text>`;
  }
  out += '<path class="mark" d="M862 13h11l-5 6z"/>';
  h.innerHTML = out;

  const v = document.getElementById("vruler");
  const len = v.getBoundingClientRect().height;
  out = `<path d="M21.5 0V${len}${tickPath(6, len, 21, [17, 8, 5], true)}"/>`;
  for (let k = 0; k * STEP < len; k++) {
    const y = Math.round(6 + k * STEP) + 10;
    out += `<text x="4 4 4" y="${y} ${y + 9} ${y + 18}">${290 - k * 10}</text>`;
  }
  out += '<path class="mark" d="M15 171v11l6-5z"/>';
  v.innerHTML = out;
}

const COLORS = `000000 1a1a18 333330 4d4d4a 666663 80807d 999997 b3b3b0 ccccc8 e4e4e1 eaeae6 f1f1ee f9f9f7 fefefc
740000 e60000 808004 f2ff0d 0a910a 14ff14 0a8c80 1af5ff 000080 0000f0 780080 eb00f0
280805 4a0a0a 780000 980008 c00008 e60000 eb1530 ea4058 f0727e f5a0a8 f3d0d0
240b06 4a1414 6a1420 8e1c2c b4243c c65058 d87c80 e0a6ac f5d5d2
1e1c1a 403330 644a4c 8a6464 a88e8c c4b4b2 dededa
200806 4c200c 782c00 a04000 c84c08 ee5c08 ec7430 f48c50 f8ac80 f8c8a4 f8e4d4
241810 4a2614 6c3820 98542c c06c34 d08460`.split(/\s+/);

document.getElementById("swatches").innerHTML =
  '<button class="swatch" aria-label="None"><svg viewBox="0 0 16 16"><path d="M0 0h16v16H0z" fill="#fff"/><path d="M0 0l16 16M16 0L0 16" stroke="#6a1420" stroke-width="1.500"/></svg></button>' +
  COLORS.map(c => `<button class="swatch" aria-label="#${c}" style="background:#${c}"></button>`).join("");

drawRulers();
window.addEventListener("resize", drawRulers);
```
